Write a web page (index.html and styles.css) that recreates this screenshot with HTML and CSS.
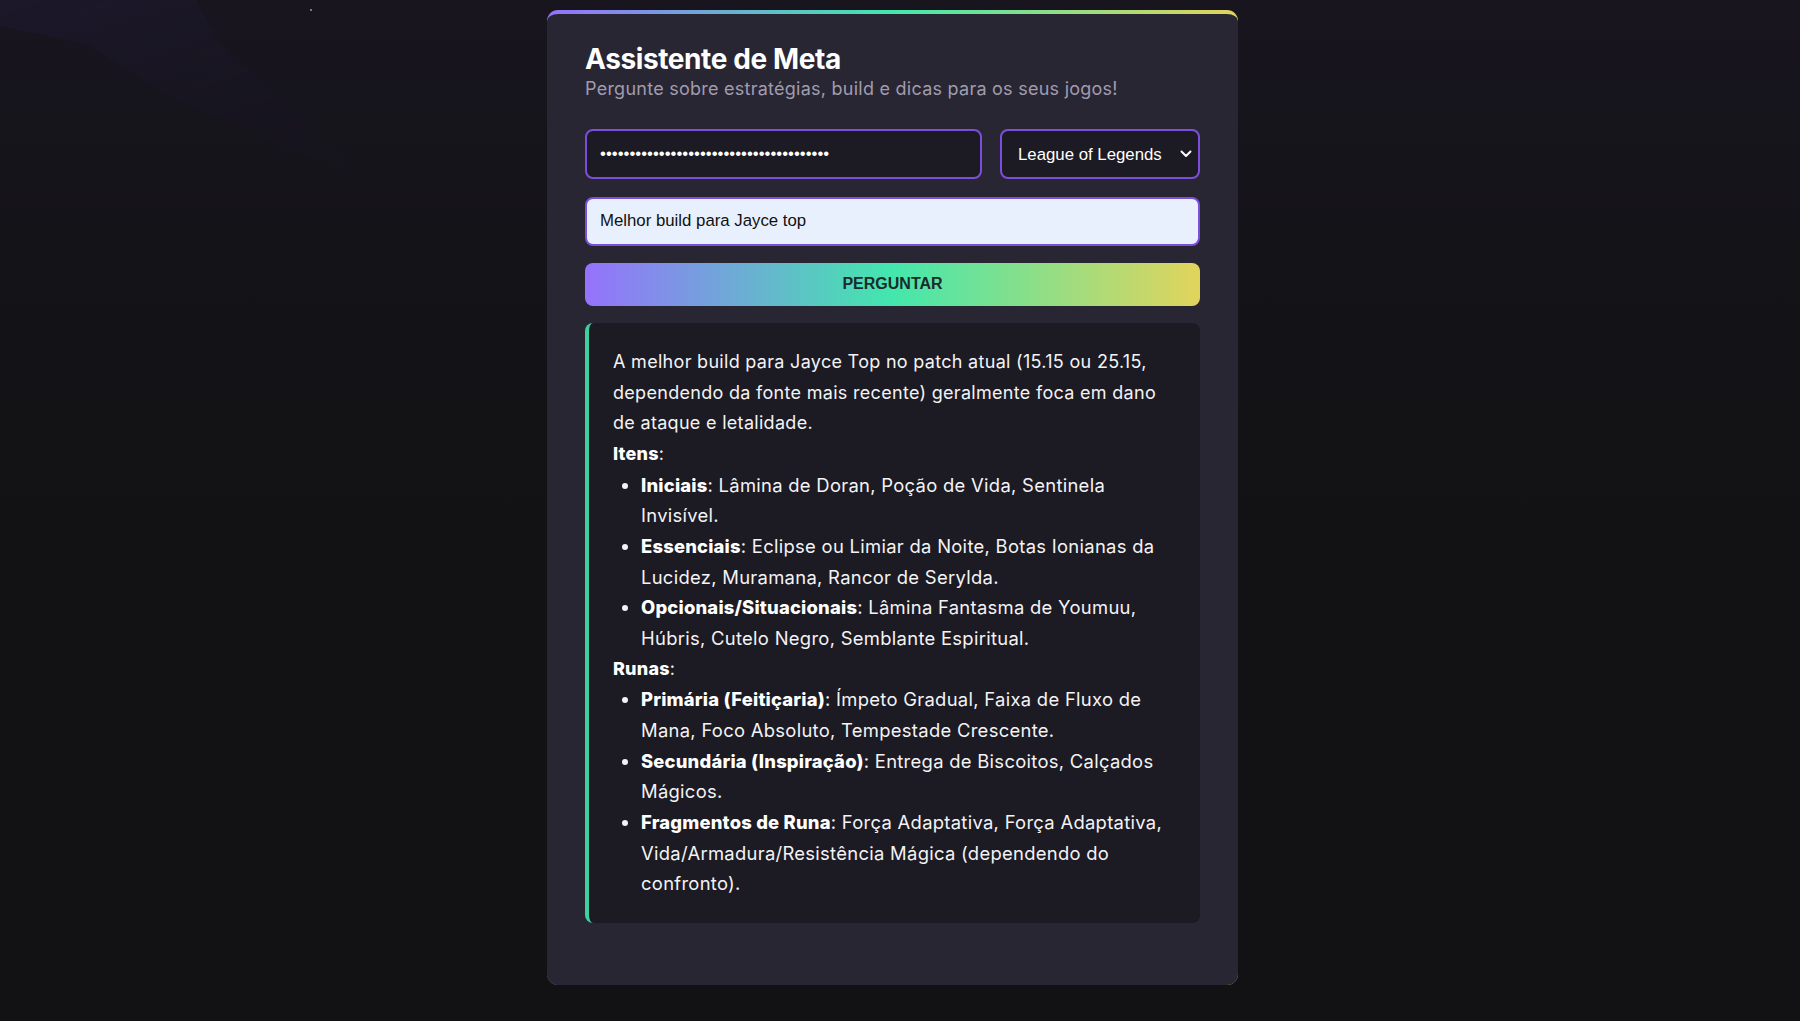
FILE: index.html
```html
<!DOCTYPE html>
<html lang="pt-BR">
<head>
<meta charset="utf-8">
<title>Assistente de Meta</title>
<link rel="stylesheet" href="styles.css">
</head>
<body>
<div class="aurora"></div>
<div class="star"></div>
<main class="page">
  <section class="card">
    <header class="head">
      <h1 class="title">Assistente de Meta</h1>
      <p class="subtitle">Pergunte sobre estratégias, build e dicas para os seus jogos!</p>
    </header>
    <form class="form">
      <div class="row">
        <input class="field key" type="password" value="AIzaSyDxxxxxxxxxxxxxxxxxxxxxxxxxxxxxxxx">
        <div class="select-wrap">
          <select class="field game">
            <option>League of Legends</option>
          </select>
          <svg class="chev" width="12" height="8" viewBox="0 0 12 8"><path d="M1.5 1.5 L6 6 L10.5 1.5" fill="none" stroke="#fff" stroke-width="2" stroke-linecap="round" stroke-linejoin="round"/></svg>
        </div>
      </div>
      <input class="field question" type="text" value="Melhor build para Jayce top">
      <button class="ask" type="button">PERGUNTAR</button>
    </form>
    <div class="answer">
      <p>A melhor build para Jayce Top no patch atual (15.15 ou 25.15, dependendo da fonte mais recente) geralmente foca em dano de ataque e letalidade.</p>
      <p><strong>Itens</strong>:</p>
      <ul>
        <li><strong>Iniciais</strong>: Lâmina de Doran, Poção de Vida, Sentinela Invisível.</li>
        <li><strong>Essenciais</strong>: Eclipse ou Limiar da Noite, Botas Ionianas da Lucidez, Muramana, Rancor de Serylda.</li>
        <li><strong>Opcionais/Situacionais</strong>: Lâmina Fantasma de Youmuu, Húbris, Cutelo Negro, Semblante Espiritual.</li>
      </ul>
      <p><strong>Runas</strong>:</p>
      <ul>
        <li><strong>Primária (Feitiçaria)</strong>: Ímpeto Gradual, Faixa de Fluxo de Mana, Foco Absoluto, Tempestade Crescente.</li>
        <li><strong>Secundária (Inspiração)</strong>: Entrega de Biscoitos, Calçados Mágicos.</li>
        <li><strong>Fragmentos de Runa</strong>: Força Adaptativa, Força Adaptativa, Vida/Armadura/Resistência Mágica (dependendo do confronto).</li>
      </ul>
    </div>
  </section>
</main>
</body>
</html>
```
FILE: styles.css
```css
* { box-sizing: border-box; }
html, body { height: 100%; }
body {
  margin: 0;
  background: linear-gradient(to bottom, #18151f 0px, #141318 260px, #121214 520px, #121214 100%);
  font-family: Inter, "Noto Sans", sans-serif;
  color: #f2f2f5;
  overflow: hidden;
  position: relative;
}
.aurora {
  position: absolute;
  left: -40px;
  top: -60px;
  width: 420px;
  height: 260px;
  background: linear-gradient(160deg, rgba(36,30,62,0.45), rgba(30,26,50,0.2) 60%, rgba(20,18,30,0));
  clip-path: polygon(10% 0, 48% 0, 62% 40%, 100% 95%, 52% 62%, 30% 40%, 0 30%);
  filter: blur(6px);
}
.star {
  position: absolute;
  left: 310px;
  top: 9px;
  width: 2px;
  height: 2px;
  border-radius: 50%;
  background: #9c98b0;
}
.page {
  position: relative;
  padding: 10px 0 0 547px;
}
.card {
  width: 691px;
  border-top: 4px solid transparent;
  border-radius: 11px;
  background:
    linear-gradient(#292634, #292634) padding-box,
    linear-gradient(90deg, #9572fc 0%, #43e7ad 50%, #e2d45c 100%) border-box;
  padding: 28px 38px 62px 38px;
}
.head { margin-bottom: 30px; }
.title {
  margin: 0 0 3px;
  font-size: 28px;
  line-height: 34px;
  font-weight: 700;
  letter-spacing: -0.4px;
  color: #ffffff;
}
.subtitle {
  margin: 0;
  font-size: 18px;
  line-height: 20px;
  letter-spacing: 0.25px;
  color: #a09cae;
}
.form {
  display: flex;
  flex-direction: column;
  gap: 17.6px;
}
.row {
  display: flex;
  gap: 18px;
}
.field {
  font-family: "Liberation Sans", Arial, sans-serif;
  font-size: 16.8px;
  border: 2px solid #7b4fdc;
  border-radius: 8px;
  background: #1c1a23;
  color: #ffffff;
  outline: none;
}
.key {
  flex: 1;
  height: 50px;
  padding: 0 13px;
}
.select-wrap {
  position: relative;
  width: 200px;
}
.game {
  appearance: none;
  -webkit-appearance: none;
  width: 100%;
  height: 50px;
  padding: 0 14px 0 16px;
}
.chev {
  position: absolute;
  right: 8px;
  top: 21px;
}
.question {
  height: 49px;
  padding: 0 13px;
  background: #e8f0fe;
  color: #111;
}
.ask {
  height: 42.4px;
  border: none;
  border-radius: 8px;
  background: linear-gradient(90deg, #9572fc 0%, #43e7ad 50%, #e2d45c 100%);
  color: #1b2b2c;
  font-family: "Liberation Sans", Arial, sans-serif;
  font-size: 16px;
  font-weight: 700;
}
.answer {
  margin-top: 17.6px;
  background: #1c1a23;
  border-left: 4px solid #3fd0a0;
  border-radius: 8px;
  padding: 24px 24px 24px 24px;
  font-size: 18px;
  line-height: 30.66px;
  letter-spacing: 0.3px;
  color: #f3f3f5;
}
.answer p { margin: 0; }
.answer ul { margin: 0; padding-left: 28px; }
.answer li { font-size: 18.4px; }
.answer strong { font-weight: 800; letter-spacing: 0.2px; color: #ffffff; }
```
